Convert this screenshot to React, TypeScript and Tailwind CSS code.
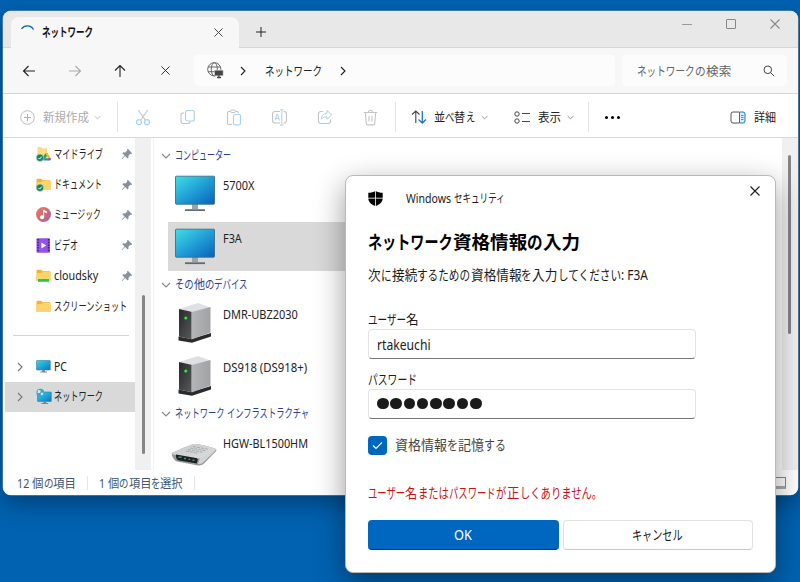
import React, { useLayoutEffect, useRef } from "react";

/* Relative advance of each script: condensed kana beside nearly full-width kanji. */
function ratio(s: string) {
  if (/^[\u30a0-\u30ff]/.test(s)) return 0.76;
  if (/^[\u3040-\u309f\u3002]/.test(s)) return 0.84;
  if (/^[\x00-\x7f]/.test(s)) return 0.94;
  return 1;
}

/* Single-line label fitted to a width, keeping the proportions between scripts. */
function T({ children, w, className = "pt-[2px]" }: { children: string; w: number; className?: string }) {
  const ref = useRef<HTMLSpanElement>(null);
  const runs = children.match(/[\u30a0-\u30ff]+|[\u3040-\u309f\u3002]+|[\x00-\x7f]+|[^\x00-\x7f\u3040-\u30ff\u3002]+/g) || [];
  useLayoutEffect(() => {
    const fit = () => {
      const el = ref.current;
      if (!el) return;
      const parts = Array.from(el.children) as HTMLElement[];
      const widths = parts.map((p) => (p.firstElementChild as HTMLElement).offsetWidth);
      const k = w / widths.reduce((sum, n, i) => sum + n * ratio(runs[i]), 0);
      parts.forEach((p, i) => {
        const s = k * ratio(runs[i]);
        p.style.width = widths[i] * s + "px";
        (p.firstElementChild as HTMLElement).style.transform = `scaleX(${s})`;
      });
    };
    fit();
    document.fonts?.ready.then(fit);
  }, []);
  return (
    <span ref={ref} className={"inline-flex shrink-0 whitespace-pre leading-5 " + className} style={{ width: w }}>
      {runs.map((r, i) => (
        <span key={i} className="block">
          <span className="inline-block origin-left">{r}</span>
        </span>
      ))}
    </span>
  );
}

function Chevron({ dir = "right", size = 10, className = "" }: { dir?: "right" | "down"; size?: number; className?: string }) {
  return (
    <svg width={size} height={size} viewBox="0 0 10 10" fill="none" stroke="currentColor" className={"shrink-0 " + className}>
      <path d={dir === "right" ? "M3 1l4 4-4 4" : "M1 3l4 4 4-4"} strokeWidth="1.1" />
    </svg>
  );
}

function Cross({ size = 9, className = "" }: { size?: number; className?: string }) {
  return (
    <svg width={size} height={size} viewBox="0 0 10 10" fill="none" stroke="currentColor" className={"shrink-0 " + className}>
      <path d="M.5.5l9 9M9.5.5l-9 9" strokeWidth="1.1" />
    </svg>
  );
}

function Arrow({ rotate = "" }: { rotate?: string }) {
  return (
    <svg width="14" height="14" viewBox="0 0 14 14" fill="none" stroke="currentColor" strokeWidth="1.1" className={rotate}>
      <path d="M13 7H1.5M6.5 2l-5 5 5 5" />
    </svg>
  );
}

function GlobePc() {
  return (
    <svg width="17" height="17" viewBox="0 0 17 17" fill="none" stroke="#666" strokeWidth="1" className="shrink-0">
      <circle cx="7.3" cy="7.3" r="6.6" />
      <ellipse cx="7.3" cy="7.3" rx="3" ry="6.6" />
      <path d="M1.2 5h12.2M1.2 9.7h7" />
      <path d="M7.500 8.300h8.700v5.400H7.500z" fill="#444" stroke="#fcfcfc" strokeWidth=".4" />
      <path d="M11.900 13v2.200M10 15.500h4" stroke="#444" strokeWidth="1.300" />
    </svg>
  );
}

const BLUE = "#a9d3f5";
const GREY = "#c4c4c4";

function Scissors() {
  return (
    <svg width="16" height="17" viewBox="0 0 16 17" fill="none" stroke={GREY} className="shrink-0">
      <path d="M3.2 1l7.3 10.2M12.8 1L5.5 11.2" strokeWidth="1.1" />
      <circle cx="4" cy="13.2" r="2.5" stroke={BLUE} strokeWidth="1.2" />
      <circle cx="12" cy="13.2" r="2.5" stroke={BLUE} strokeWidth="1.2" />
    </svg>
  );
}
function Copy() {
  return (
    <svg width="16" height="16" viewBox="0 0 16 16" fill="none" className="shrink-0">
      <path d="M4 4H3a2 2 0 0 0-2 2v6a2.5 2.5 0 0 0 2.500 2.500H8a2 2 0 0 0 2-2" stroke={GREY} strokeWidth="1.1" />
      <rect x="5.500" y="1.500" width="8.800" height="10.500" rx="2" stroke={BLUE} strokeWidth="1.200" />
    </svg>
  );
}
function Paste() {
  return (
    <svg width="16" height="17" viewBox="0 0 16 17" fill="none" className="shrink-0">
      <path d="M6 15.500H3A1.500 1.500 0 0 1 1.500 14V4A1.500 1.500 0 0 1 3 2.500h8A1.500 1.500 0 0 1 12.500 4" stroke={GREY} strokeWidth="1.100" />
      <rect x="4.500" y="1" width="5" height="2.500" rx="1.200" fill="#fff" stroke={GREY} />
      <rect x="7.500" y="5.500" width="7" height="10.300" rx="1.500" stroke={BLUE} strokeWidth="1.200" />
    </svg>
  );
}
function Rename() {
  return (
    <svg width="17" height="17" viewBox="0 0 17 17" fill="none" className="shrink-0">
      <path d="M9 2.500H4a2.500 2.500 0 0 0-2.500 2.500v6.500A2.500 2.500 0 0 0 4 14h5M12.500 2.500A2.500 2.500 0 0 1 15.500 5v6.500a2.500 2.500 0 0 1-3 2.500" stroke={GREY} strokeWidth="1.100" />
      <path d="M10.800 1.200v14.600M9 .8h3.600M9 16.200h3.600M3.800 11.500l2.400-6.500 2.400 6.500M4.600 9.500h3.300" stroke={BLUE} />
    </svg>
  );
}
function Share() {
  return (
    <svg width="16" height="16" viewBox="0 0 16 16" fill="none" className="shrink-0">
      <path d="M6 2.500H4A2.500 2.500 0 0 0 1.500 5v7A2.500 2.500 0 0 0 4 14.500h7a2.500 2.500 0 0 0 2.500-2.500v-1.500" stroke={GREY} strokeWidth="1.100" />
      <path d="M10 1.500l4.800 4.300L10 10.200V7.800C7.500 7.700 5.800 8.500 4.300 10.200 4.700 6.500 6.500 4.300 10 4z" stroke={BLUE} strokeLinejoin="round" />
    </svg>
  );
}
function Trash() {
  return (
    <svg width="15" height="17" viewBox="0 0 15 17" fill="none" stroke={GREY} strokeWidth="1.100" className="shrink-0">
      <path d="M.8 3.500h13.400M5.500 3.300a2 2 0 0 1 4 0M2.300 3.500l1 11a1.500 1.500 0 0 0 1.500 1.400h5.400a1.500 1.500 0 0 0 1.500-1.400l1-11M6 7v5.500M9 7v5.500" />
    </svg>
  );
}

function Pin() {
  return (
    <svg width="12" height="12" viewBox="0 0 12 12" className="shrink-0">
      <path d="M6.800.8l4.400 4.400-1 .7-.8-.2-2 2 .1 2-.9.9-2.500-2.500L1 11.200l-.4-.4 3-3.200L1.300 5.200l.9-.9 2.100.1 2-2-.2-.9z" fill="#87919b" />
    </svg>
  );
}

function SideIcon({ kind }: { kind: string }) {
  const folder = (
    <>
      <path d="M.5 2.800c0-.7.4-1.100 1-1.100h3.600l1.600 1.500h7c.5 0 .8.4.8.9v8.200c0 .4-.3.700-.7.700H1.200c-.4 0-.7-.3-.7-.7z" fill="#f3b52f" />
      <path d="M.5 5.200l5-.1 1.400-1.200h7.600v8.400c0 .4-.3.700-.7.700H1.200c-.4 0-.7-.3-.7-.7z" fill="#fdd46b" />
    </>
  );
  const synced = (
    <g>
      <circle cx="4" cy="10.800" r="3.700" fill="#16855a" stroke="#fff" strokeWidth=".4" />
      <path d="M2.400 10.900l1.200 1.200 2.200-2.500" fill="none" stroke="#fff" />
    </g>
  );
  return (
    <svg width="15" height="15" viewBox="0 0 15 15" className="shrink-0 overflow-visible">
      {kind === "drive" && (
        <>
          <path d="M1.500 0h3.600l1 1.200H11V12H1.500z" fill="#fbdc85" />
          <path d="M9.500 6L6.300 11.500l1.500 2.200 3.400-5.200z" fill="#20a45a" />
          <path d="M9.200 6h2.500l3 5.200h-2.800z" fill="#f8b81c" />
          <path d="M7.800 13.600h6.300l.8-2.400H9.300z" fill="#3b78e7" />
          <path d="M12.200 11.200h2.700l-.9 2.200z" fill="#e53935" />
          {synced}
        </>
      )}
      {kind === "docs" && <>{folder}{synced}</>}
      {kind === "shot" && folder}
      {kind === "cloud" && <>{folder}<path d="M2 11h11v2.800H2z" fill="#18d047" /></>}
      {kind === "music" && (
        <>
          <defs><linearGradient id="mu" x1="0" y1="0" x2="1" y2="1"><stop stopColor="#ef7d55" /><stop offset="1" stopColor="#ad5c9c" /></linearGradient></defs>
          <circle cx="7.500" cy="7.500" r="7.500" fill="url(#mu)" />
          <circle cx="6" cy="10.200" r="2" fill="#fff" />
          <path d="M7 10V2.600l3.800 1.600v2L8.200 5.200V10" fill="#fff" />
        </>
      )}
      {kind === "video" && (
        <>
          <rect x=".5" y=".2" width="13.500" height="14.600" rx="1" fill="#9453e6" />
          <path d="M2 1v13M12.600 1v13" stroke="#3d1889" strokeWidth="1.500" strokeDasharray="1.500 1.200" />
          <path d="M5.400 4.600v5.800l4.800-2.900z" fill="#fff" />
        </>
      )}
      {(kind === "pc" || kind === "net") && (
        <>
          <defs><linearGradient id="pcs" x1="0" y1="0" x2="1" y2="1"><stop stopColor="#36d8e4" /><stop offset="1" stopColor="#0d72c8" /></linearGradient></defs>
          <rect x={kind === "pc" ? 0.5 : 1.5} y={kind === "pc" ? 1.5 : 3} width="13.800" height="9.500" rx=".5" fill="url(#pcs)" stroke="#397c98" strokeWidth=".6" />
          <path d={kind === "pc" ? "M6.300 11h2.600v1.500h2v.9H4.300v-.9h2z" : "M7.500 12.800h2.600V14h2v1H5.500v-1h2z"} fill="#78848c" />
        </>
      )}
      {kind === "net" && (
        <>
          <circle cx="4.300" cy="3.700" r="3.900" fill="#3ea3cb" />
          <path d="M2 .8l2.800.7-.6 2.200-2.700.6zM5.500 3.500l2 .5-1.200 2.600-1.800-1z" fill="#c8eff8" />
        </>
      )}
    </svg>
  );
}

function Monitor() {
  return (
    <svg width="42" height="37" viewBox="0 0 42 37" className="block">
      <defs><linearGradient id="mon" x1="0" y1="0" x2="1" y2="1"><stop stopColor="#3fe0e6" /><stop offset=".5" stopColor="#229fd6" /><stop offset="1" stopColor="#0861ba" /></linearGradient></defs>
      <path d="M18 29h6v5h-6z" fill="#9aa4ab" />
      <path d="M11 34.300h20v1.800H11z" fill="#5f6b74" />
      <rect x="1.500" y="1.200" width="39" height="28" rx=".8" fill="url(#mon)" stroke="#3c6f86" strokeWidth=".9" />
    </svg>
  );
}
function Server() {
  return (
    <svg width="34" height="42" viewBox="0 0 34 42" className="block">
      <defs>
        <linearGradient id="sf" x1="0" y1="0" x2="1" y2="1"><stop stopColor="#262829" /><stop offset="1" stopColor="#58595a" /></linearGradient>
        <linearGradient id="ss" x1="0" y1="0" x2="1" y2="0"><stop stopColor="#b3b5b7" /><stop offset="1" stopColor="#a0a2a5" /></linearGradient>
      </defs>
      <path d="M.5 34.500L13 37l20-6v3.500L14 40.800.5 38.500z" fill="#2a2b2c" />
      <path d="M1 7L20 1l12.500 4.500L14.500 10z" fill="#dfe0e4" />
      <path d="M13.500 10l19-5v25.500l-19 7z" fill="url(#ss)" />
      <path d="M1 7l12.500 2.800v27.500L1 34.500z" fill="url(#sf)" />
      <circle cx="7.800" cy="16" r="1.600" fill="#25ef35" />
    </svg>
  );
}
function Router() {
  return (
    <svg width="46" height="24" viewBox="0 0 46 24" className="block">
      <defs><linearGradient id="rt" x1="0" y1="0" x2="1" y2="1"><stop stopColor="#c9cacc" /><stop offset="1" stopColor="#dcddde" /></linearGradient></defs>
      <path d="M1 10C8 6.500 16 3 22 1.200c5-.7 15 2.300 22 4.300 1.500.6 1.800 1.700 1 2.800L33 20.500c-1.500 1.500-3.500 2.200-6 1.900L6 18.500C3 17.500 0 12 1 10z" fill="#97999c" />
      <path d="M1 10C8 6.500 16 3 22 1.200c5-.7 15 2.300 22 4.300 1.300.6 1 1.500 0 2.200L32 14.500c-2 1-4 1.300-6 1L2 11.500z" fill="url(#rt)" />
      <path d="M44.800 7.500L32 19.500c-1.500 1.200-3 1.700-5 1.400l2-5.800z" fill="#d3d4d6" />
      <path d="M5 11.500l20 3.500c1.500.3 2 .9 1.700 1.900l-.9 3.600L7 17.300c-1.500-.9-2.500-4-2-5.800z" fill="#1c2222" />
      <path d="M7.500 14.300h3M13 15.500h2M17.500 16.400h1.800M21.500 17.200h2" stroke="#3d9b6a" strokeWidth="1.400" />
      <path d="M22 3.500l15 2.800M19.500 5l15 2.800M17 6.500l14 2.700M15 8l12 2.300" stroke="#a3a5a8" strokeWidth=".9" strokeDasharray="3 1" />
    </svg>
  );
}

const pinned: [string, string, number, boolean][] = [
  ["drive", "マイドライブ", 49, true],
  ["docs", "ドキュメント", 48, true],
  ["music", "ミュージック", 47, true],
  ["video", "ビデオ", 24, true],
  ["cloud", "cloudsky", 44, true],
  ["shot", "スクリーンショット", 73, false],
];

function TreeRow({ kind, label, w, pin, expandable, selected }: { kind: string; label: string; w: number; pin?: boolean; expandable?: boolean; selected?: boolean }) {
  return (
    <div className={"flex h-[30.4px] shrink-0 items-center pl-2.5 " + (selected ? "bg-[#d9d9d9]" : "")}>
      <span className="w-[21px] text-[#777]">{expandable && <Chevron />}</span>
      <SideIcon kind={kind} />
      <T w={w} className="ml-[3px] pt-px">{label}</T>
      {pin && <span className="ml-auto mr-[2px] flex"><Pin /></span>}
    </div>
  );
}

function Group({ title, w, children }: { title: string; w: number; children: React.ReactNode }) {
  return (
    <section className="h-[129px] shrink-0">
      <h3 className="flex h-[27px] items-center pl-[7px] text-[12px] text-[#2b3f91]">
        <Chevron dir="down" className="mr-[4px] text-[#888]" />
        <T w={w} className="pt-px">{title}</T>
      </h3>
      <div className="flex flex-col gap-1 pl-[14px] pr-[12px]">{children}</div>
    </section>
  );
}
function Device({ icon, label, w, selected }: { icon: React.ReactNode; label: string; w: number; selected?: boolean }) {
  return (
    <div className={"flex h-[49px] " + (selected ? "bg-[#d9d9d9]" : "")}>
      <div className="flex w-[54px] shrink-0 items-center justify-center">{icon}</div>
      <T w={w} className="mt-[6.500px] ml-[1px]">{label}</T>
    </div>
  );
}

function Explorer() {
  return (
    <div className="absolute left-[3px] top-[11px] flex h-[484px] w-[795px] flex-col overflow-hidden rounded-lg bg-white shadow-[0_0_0_0.5px_#8299b0,0_8px_24px_rgba(0,0,0,0.35)]">
      <header className="flex h-[37px] shrink-0 items-end border-b border-[#d6d6d6] bg-[#e8e8e8] pl-2">
        <div className="-mb-px flex h-[31px] w-[228px] items-center rounded-t-lg bg-[#f7f7f7] pl-[9px] pr-[16px] text-[12px] font-bold text-[#111]">
          <svg width="15" height="15" viewBox="0 0 15 15" fill="none" stroke="#0067c0" strokeWidth="1.300" className="-mt-[2px]"><path d="M1.500 5A7 7 0 0 1 13.500 5.500" /></svg>
          <T w={51} className="ml-[7px]">ネットワーク</T>
          <Cross className="ml-auto text-[#444]" />
        </div>
        <svg width="10" height="10" viewBox="0 0 10 10" stroke="#222" className="mb-[10px] ml-[17px]"><path d="M0 5h10M5 0v10" /></svg>
        <div className="mb-[18px] ml-auto flex items-center gap-[34px] pr-[18px] text-[#888]">
          <span className="h-px w-[10px] bg-[#999]" />
          <span className="size-[10px] rounded-[1px] border border-[#888]" />
          <Cross size={10} />
        </div>
      </header>

      <nav className="flex h-[46px] shrink-0 items-center border-b border-[#d4d4d4] bg-[#f7f7f7] text-[12.5px] text-[#222]">
        <div className="flex w-[191px] items-center pl-[19px]">
          <Arrow />
          <span className="ml-[32px] text-[#aaa]"><Arrow rotate="rotate-180" /></span>
          <span className="ml-[31px]"><Arrow rotate="rotate-90" /></span>
          <Cross className="ml-[34px] text-[#333]" />
        </div>
        <div className="flex h-[31px] w-[421px] items-center rounded bg-[#fcfcfc] pl-[13px]">
          <GlobePc />
          <Chevron className="ml-[14px] mt-px" />
          <T w={57} className="ml-[17px] pt-[2px]">ネットワーク</T>
          <Chevron className="ml-[16px] mt-px" />
        </div>
        <div className="ml-[7px] flex h-[31px] w-[165px] items-center rounded bg-[#fcfcfc] pl-[15px] text-[#666]">
          <T w={94}>ネットワークの検索</T>
          <svg width="12" height="12" viewBox="0 0 12 12" fill="none" stroke="#444" className="ml-[32px] mt-px"><circle cx="4.800" cy="4.800" r="3.800" /><path d="M7.600 7.600l3.600 3.600" /></svg>
        </div>
      </nav>

      <div className="flex h-[44px] shrink-0 items-center border-b border-[#d9d9d9] bg-white pt-[3px] text-[12px] text-[#222]">
        <div className="flex h-[30px] w-[115px] items-center border-r border-[#e2e2e2] pl-[17px] text-[#aaa]">
          <svg width="15" height="15" viewBox="0 0 15 15" fill="none" className="shrink-0"><circle cx="7.500" cy="7.500" r="6.800" stroke="#bbb" /><path d="M4 7.500h7M7.500 4v7" stroke="#83bce9" /></svg>
          <T w={46} className="ml-[8px] pt-[2px]">新規作成</T>
          <Chevron dir="down" size={7} className="ml-[5px]" />
        </div>
        <div className="flex h-[30px] w-[278px] items-center border-r border-[#e2e2e2] pl-[17px]">
          <Scissors /><span className="w-[29px]" /><Copy /><span className="w-[30px]" /><Paste /><span className="w-[29px]" /><Rename /><span className="w-[29px]" /><Share /><span className="w-[30px]" /><Trash />
        </div>
        <div className="flex h-[30px] w-[193px] items-center border-r border-[#e2e2e2] pl-[15px]">
          <svg width="16" height="14" viewBox="0 0 16 14" fill="none" strokeWidth="1.100"><path d="M4.800 13V1M1 4.500L4.800 1l3.700 3.500" stroke="#444" /><path d="M11.300 1v12M7.500 9.500l3.800 3.500 3.700-3.500" stroke="#1975c8" strokeWidth="1.300" /></svg>
          <T w={41} className="ml-[7px] pt-[2px]">並べ替え</T>
          <Chevron dir="down" size={7} className="ml-[6px] text-[#777]" />
          <svg width="17" height="13" viewBox="0 0 17 13" fill="none" stroke="#444" className="ml-[26px]"><circle cx="3" cy="3" r="2.200" /><circle cx="3" cy="10" r="2.200" /><path d="M8 2.500h8M8 10.500h8" /></svg>
          <T w={23} className="ml-[7px] pt-[2px]">表示</T>
          <Chevron dir="down" size={7} className="ml-[6px] text-[#777]" />
        </div>
        <div className="ml-[16px] flex gap-[3px]"><i className="size-[3px] rounded-full bg-black" /><i className="size-[3px] rounded-full bg-black" /><i className="size-[3px] rounded-full bg-black" /></div>
        <svg width="16" height="13" viewBox="0 0 16 13" fill="none" className="ml-auto"><path d="M9 1H3a2 2 0 0 0-2 2v7a2 2 0 0 0 2 2h6" stroke="#555" /><path d="M9.500 1H13a2 2 0 0 1 2 2v7a2 2 0 0 1-2 2H9.500z" fill="#dceefb" stroke="#1975c8" /><path d="M11 4.500h2.500M11 6.500h2.500M11 8.500h2.500" stroke="#1975c8" strokeWidth=".8" /></svg>
        <T w={22} className="ml-[8px] mr-[22px] pt-[2px]">詳細</T>
      </div>

      <div className="flex h-[332px] shrink-0 text-[12px] text-[#222]">
        <div className="flex w-[132px] flex-col overflow-hidden pl-[2px] pt-px">
          {pinned.map(([k, l, w, p]) => <TreeRow key={k} kind={k} label={l} w={w} pin={p} />)}
          <div className="ml-2 mr-[6px] mt-[14px] mb-[15px] h-px shrink-0 bg-[#d4d4d4]" />
          <TreeRow kind="pc" label="PC" w={13} expandable />
          <TreeRow kind="net" label="ネットワーク" w={49} expandable selected />
        </div>
        <div className="flex w-[16px] flex-col items-center bg-[#f0f0f0] pt-[157px] pl-px">
          <div className="h-[159px] w-[3px] rounded-full bg-[#858585]" />
        </div>
        <div className="ml-[2px] flex min-w-0 flex-1 flex-col overflow-hidden border-l border-[#f2f2f2] pt-[4px]">
          <div className="flex flex-col">
            <Group title="コンピューター" w={56}>
              <Device icon={<span className="mb-[1px]"><Monitor /></span>} label="5700X" w={32} />
              <Device icon={<span className="mb-[1px]"><Monitor /></span>} label="F3A" w={19} selected />
            </Group>
            <Group title="その他のデバイス" w={73}>
              <Device icon={<span className="pr-px"><Server /></span>} label="DMR-UBZ2030" w={75} />
              <Device icon={<span className="pr-px"><Server /></span>} label="DS918 (DS918+)" w={84} />
            </Group>
            <Group title="ネットワーク インフラストラクチャ" w={134}>
              <Device icon={<span className="pt-[7px] pr-[2px]"><Router /></span>} label="HGW-BL1500HM" w={85} />
            </Group>
          </div>
        </div>
        <div className="flex w-[16px] flex-col items-center bg-[#f0f0f0] pt-[17px] pr-px">
          <div className="h-[179px] w-[3px] rounded-full bg-[#858585]" />
        </div>
      </div>

      <footer className="flex flex-1 items-center bg-white pl-[14px] text-[12px] text-[#40566f]">
        <T w={59}>12 個の項目</T>
        <span className="ml-[11px] mr-[11px] h-[14px] w-px bg-[#e6e6e6]" />
        <T w={84}>1 個の項目を選択</T>
        <span className="ml-[11px] h-[14px] w-px bg-[#e6e6e6]" />
        <span className="ml-auto mr-[12px] h-[12px] w-[16px] border border-b-[3px] border-[#888] border-b-[#aaa] bg-white" />
      </footer>
    </div>
  );
}

const inputClass = "flex h-[30px] w-[328px] items-center rounded border border-[#e4e4e4] border-b-[#777] bg-white pl-[8px]";

function SecurityDialog() {
  return (
    <div className="absolute left-[345px] top-[175px] flex h-[398px] w-[431px] flex-col rounded-lg border border-[#b9b9b9] bg-white pl-[22px] text-[13.500px] text-[#1b1b1b] shadow-[0_10px_30px_rgba(0,0,0,0.4)]">
      <div className="flex h-[46px] items-center">
        <svg width="15" height="15" viewBox="0 0 15 15" className="mb-px"><path d="M7.500 0C5.500 1.300 3 1.700.3 1.800V7c0 4 3 6.700 7.200 8 4.200-1.300 7.200-4 7.200-8V1.800C12 1.700 9.500 1.300 7.500 0z" fill="#000" /><path d="M7.500 0v15M0 7.200h15" stroke="#fff" strokeWidth=".8" /></svg>
        <T w={98} className="ml-[23px] text-[12px]">Windows セキュリティ</T>
        <Cross size={10} className="mb-[16px] ml-auto mr-[15px]" />
      </div>
      <h1 className="mt-[7px] flex h-[24px] items-center text-[18.500px] font-bold text-black"><T w={212}>ネットワーク資格情報の入力</T></h1>
      <p className="mt-[11px] flex h-[20px] items-center"><T w={279}>次に接続するための資格情報を入力してください: F3A</T></p>
      <label className="mt-[26px] flex h-[19px] items-center text-[13px]"><T w={51} className="mb-px">ユーザー名</T></label>
      <div className={inputClass}><T w={54}>rtakeuchi</T></div>
      <label className="mt-[12px] flex h-[17px] items-center text-[13px]"><T w={49} className="mb-px">パスワード</T></label>
      <div className={"mt-[0.500px] " + inputClass}>
        <span className="flex gap-[1.800px]">{Array.from({ length: 8 }, (_, i) => <i key={i} className="size-[11.500px] rounded-full bg-[#1b1b1b]" />)}</span>
      </div>
      <div className="mt-[17px] flex h-[19px] items-center text-[#444]">
        <span className="flex size-[19px] items-center justify-center rounded bg-[#0067c0]">
          <svg width="11" height="9" viewBox="0 0 11 9" fill="none" stroke="#fff" strokeWidth="1.200"><path d="M1 4.500l3 3L10 1.300" /></svg>
        </span>
        <T w={111} className="ml-[8px]">資格情報を記憶する</T>
      </div>
      <p className="mt-[28px] flex h-[20px] items-center text-[#c81414]"><T w={234} className="pt-px">ユーザー名またはパスワードが正しくありません。</T></p>
      <div className="mt-[17.500px] flex gap-[4px]">
        <button className="flex h-[30px] w-[191px] items-center justify-center rounded border-b border-[#003f76] bg-[#0067c0] text-white"><T w={18} className="mr-px">OK</T></button>
        <button className="flex h-[30px] w-[190px] items-center justify-center rounded border border-[#e2e2e2] border-b-[#c9c9c9] bg-white"><T w={51} className="mr-px">キャンセル</T></button>
      </div>
    </div>
  );
}

export default function App() {
  return (
    <main className="relative h-[582px] w-[800px] overflow-hidden bg-[#0062b1] font-['Noto_Sans','Noto_Sans_CJK_JP',sans-serif]">
      <Explorer />
      <SecurityDialog />
    </main>
  );
}
